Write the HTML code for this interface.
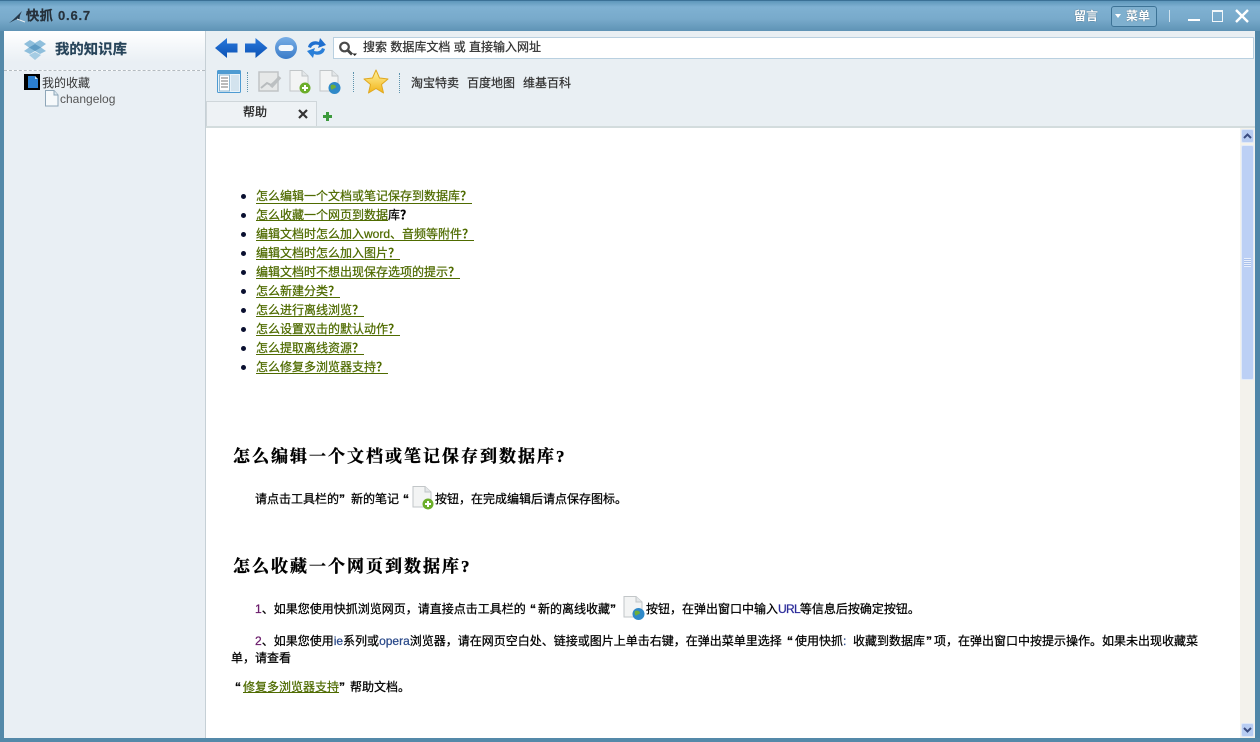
<!DOCTYPE html>
<html lang="zh"><head><meta charset="utf-8"><title>快抓</title>
<style>
html,body{margin:0;padding:0}
body{width:1260px;height:742px;position:relative;overflow:hidden;background:#fff;font:12px/16px "Liberation Sans","WenQuanYi Zen Hei","Noto Sans CJK SC",sans-serif;color:#000}
.a{position:absolute;white-space:nowrap}
.t{-webkit-text-stroke:.25px currentColor}
a{color:#4f6b00;text-decoration:underline}
.l{position:absolute;left:256px;white-space:nowrap;height:15px;line-height:18px;border-bottom:1px solid #4f6b00;color:#4f6b00;-webkit-text-stroke:.25px currentColor}
.l b{-webkit-text-stroke:0}
.d{position:absolute;left:241px;width:5px;height:5px;border-radius:50%;background:#0a1030}
.h{position:absolute;left:233px;white-space:nowrap;font:bold 17px/22px "Liberation Serif","Noto Serif CJK SC",serif;letter-spacing:2px;color:#000;-webkit-text-stroke:.35px #000}
.sep{position:absolute;width:0;height:20px;border-left:1px dotted #5d93ad}
svg{position:absolute;overflow:visible}
</style></head><body>
<!-- chrome -->
<div class="a" style="left:0;top:0;width:1260px;height:31px;background:linear-gradient(#5e97bb,#7fb1d2 20%,#78aacb 60%,#5f93b5);border-top:1px solid #3b7196;box-sizing:border-box"></div>
<div class="a" style="left:0;top:31px;width:4px;height:711px;background:#5489a9"></div>
<div class="a" style="left:1255px;top:31px;width:5px;height:711px;background:#4f86a8"></div>
<div class="a" style="left:0;top:738px;width:1260px;height:4px;background:#5489a9"></div>
<svg style="left:8px;top:9px" width="18" height="16" viewBox="0 0 18 16"><path d="M1 14C5 11 8 8 14 2C12 6 11 8 12 12C10 10 9 10 7 11C5 12 3 13 1 14Z" fill="#26394a"/><path d="M9 10L17 13" stroke="#e8eef2" stroke-width="1"/></svg>
<div class="a" style="left:26px;top:7px;font:bold 13px/17px 'Liberation Sans','WenQuanYi Zen Hei',sans-serif;color:#27323c;letter-spacing:.8px;-webkit-text-stroke:.2px #27323c">快抓 0.6.7</div>
<div class="a" style="left:1074px;top:8px;color:#fff;text-shadow:0 0 1px #30485a;font-weight:bold">留言</div>
<div class="a" style="left:1111px;top:6px;width:44px;height:19px;border:1px solid #3d7396;border-radius:3px;background:#7fb0cf;box-sizing:content-box"></div>
<div class="a" style="left:1115px;top:14px;width:0;height:0;border:3px solid transparent;border-top:4px solid #fff"></div>
<div class="a" style="left:1126px;top:8px;color:#fff;text-shadow:0 0 1px #30485a;font-weight:bold">菜单</div>
<div class="a" style="left:1169px;top:10px;width:1px;height:12px;background:#cfe2ee"></div>
<div class="a" style="left:1188px;top:19px;width:12px;height:2px;background:#fff"></div>
<div class="a" style="left:1212px;top:10px;width:9px;height:9px;border:1.5px solid #f2f7fa;border-top-width:2px"></div>
<svg style="left:1235px;top:9px" width="14" height="14" viewBox="0 0 14 14"><path d="M1 1L13 13M13 1L1 13" stroke="#fff" stroke-width="2.4"/></svg>

<!-- sidebar -->
<div class="a" style="left:4px;top:31px;width:201px;height:707px;background:#e9eff4"></div>
<div class="a" style="left:4px;top:31px;width:201px;height:40px;background:linear-gradient(#fff,#e9eff4 80%);border-bottom:1px dashed #b4bbc0;box-sizing:border-box"></div>
<div class="a" style="left:205px;top:31px;width:1px;height:707px;background:#c6d0d6"></div>
<svg style="left:23px;top:38px" width="24" height="24" viewBox="0 0 24 24"><path d="M1 6L7 2L12 5L17 2L23 6L18 9.500L23 13L17 16L12 13L7 16L1 13L6 9.500Z" fill="#8fbfdc"/><path d="M6 9.500L12 6L18 9.500L12 13Z" fill="#5f9cc4"/><path d="M6 17L12 14L18 17L12 22Z" fill="#a5cce3"/></svg>
<div class="a" style="left:55px;top:42px;font-size:14.400px;line-height:17px;font-weight:bold;color:#27445a;-webkit-text-stroke:.2px #27445a">我的知识库</div>
<svg style="left:24px;top:74px" width="17" height="16" viewBox="0 0 17 16"><rect width="16" height="16" fill="#000"/><path d="M4 2H11L14 5V14H4Z" fill="#2b7fd0"/><path d="M11 2L14 5H11Z" fill="#bfe0f6"/></svg>
<div class="a" style="left:42px;top:75px;color:#333">我的收藏</div>
<svg style="left:45px;top:90px" width="14" height="17" viewBox="0 0 14 17"><path d="M.5 .500H9L13 5V16H.5Z" fill="#f6f9fb" stroke="#8ea6b8"/><path d="M9 .500V5H13" fill="#dbe8f0" stroke="#8ea6b8"/></svg>
<div class="a" style="left:60px;top:91px;color:#555;font-size:12px">changelog</div>

<!-- toolbar -->
<div class="a" style="left:206px;top:31px;width:1049px;height:97px;background:#e9eff3"></div>
<svg style="left:215px;top:38px" width="23" height="20" viewBox="0 0 23 20"><defs><linearGradient id="ar" x1="0" y1="0" x2="0" y2="1"><stop offset="0" stop-color="#2a78dc"/><stop offset="1" stop-color="#0b52b4"/></linearGradient></defs><path d="M0 10L12 0V5.500H22.500V14.500H12V20Z" fill="url(#ar)"/></svg>
<svg style="left:245px;top:38px" width="23" height="20" viewBox="0 0 23 20"><path d="M22.500 10L10.500 0V5.500H0V14.500H10.500V20Z" fill="url(#ar)"/></svg>
<svg style="left:274px;top:36px" width="24" height="24" viewBox="0 0 24 24"><defs><linearGradient id="m" x1="0" y1="0" x2="0" y2="1"><stop offset="0" stop-color="#78aee6"/><stop offset="1" stop-color="#3a7bc8"/></linearGradient></defs><circle cx="12" cy="12" r="11" fill="url(#m)"/><rect x="4.500" y="9" width="15" height="6" rx="3" fill="#f4f8fc"/></svg>
<svg style="left:305px;top:36px" width="23" height="24" viewBox="0 0 23 24"><path d="M3 11C4 6 9 4 14 6L15 2L21 9L13 12L14 9C10 8 7 9 6 12Z" fill="#1f6fcf"/><path d="M20 13C19 18 14 20 9 18L8 22L2 15L10 12L9 15C13 16 16 15 17 12Z" fill="#2a7fd8"/></svg>
<div class="a" style="left:333px;top:37px;width:921px;height:22px;background:#fff;border:1px solid #b9d0e0;box-sizing:border-box"></div>
<svg style="left:338px;top:41px" width="20" height="16" viewBox="0 0 20 16"><circle cx="6.500" cy="6" r="4.300" fill="#fff" stroke="#4a4a4a" stroke-width="2.200"/><path d="M10 9.500L14 13.500" stroke="#444" stroke-width="2.800"/><path d="M14.500 12.500H19L16.700 15Z" fill="#222"/></svg>
<div class="a t" style="left:363px;top:39px;color:#333">搜索 数据库文档 或 直接输入网址</div>

<svg style="left:217px;top:70px" width="24" height="23" viewBox="0 0 24 23"><rect x=".5" y=".5" width="23" height="22" rx="1" fill="#e9f3fa" stroke="#4e9bd2"/><rect x="1" y="1" width="22" height="3" fill="#4e9bd2"/><rect x="2.500" y="5" width="10" height="16" fill="#fff" stroke="#8db7d2"/><path d="M4 8H11M4 11H11M4 14H11M4 17H11" stroke="#777"/><rect x="14" y="5" width="8" height="16" fill="#d3e3ee"/></svg>
<div class="sep" style="left:247px;top:72px"></div>
<svg style="left:258px;top:70px" width="24" height="23" viewBox="0 0 24 23"><rect x="1" y="2" width="19" height="19" fill="#e6e8e8" stroke="#c0c4c6" stroke-width="1.500"/><path d="M3 18L9 13L13 15L20 9" stroke="#b8bcbe" stroke-width="2" fill="none"/><path d="M13 17L22 7" stroke="#bcc0c2" stroke-width="3.500"/></svg>
<svg style="left:288px;top:70px" width="24" height="25" viewBox="0 0 24 25"><path d="M2 .5H14L20 6V21H2Z" fill="#f3f4f4" stroke="#c2c6c8"/><path d="M14 .5V6H20" fill="#e3e6e8" stroke="#c2c6c8"/><circle cx="17" cy="18" r="5.500" fill="#6cae2a"/><path d="M17 15V21M14 18H20" stroke="#fff" stroke-width="2"/></svg>
<svg style="left:318px;top:70px" width="24" height="25" viewBox="0 0 24 25"><path d="M2 .5H14L20 6V21H2Z" fill="#f3f4f4" stroke="#c2c6c8"/><path d="M14 .5V6H20" fill="#e3e6e8" stroke="#c2c6c8"/><circle cx="16.500" cy="18" r="6" fill="#2f89c8"/><path d="M13 15C15 14 18 15 18 17C17 19 15 18 14 20C13 19 12 17 13 15Z" fill="#6fae3a"/></svg>
<div class="sep" style="left:353px;top:72px"></div>
<svg style="left:363px;top:69px" width="26" height="26" viewBox="0 0 26 26"><defs><linearGradient id="s" x1="0" y1="0" x2="0" y2="1"><stop offset="0" stop-color="#fff3a0"/><stop offset="1" stop-color="#f2b417"/></linearGradient></defs><path d="M13 1L16.500 9L25 10L18.500 15.500L20.500 24L13 19.500L5.500 24L7.500 15.500L1 10L9.500 9Z" fill="url(#s)" stroke="#e0a820" stroke-linejoin="round"/></svg>
<div class="sep" style="left:399px;top:73px"></div>
<div class="a t" style="left:411px;top:75px;color:#333">淘宝特卖</div>
<div class="a t" style="left:467px;top:75px;color:#333">百度地图</div>
<div class="a t" style="left:523px;top:75px;color:#333">维基百科</div>

<!-- tabs -->
<div class="a" style="left:206px;top:101px;width:111px;height:26px;background:#eef2f5;border:1px solid #cfd6da;border-bottom:none;box-sizing:border-box"></div>
<div class="a t" style="left:243px;top:104px;color:#222">帮助</div>
<svg style="left:298px;top:109px" width="10" height="10" viewBox="0 0 10 10"><path d="M1 1L9 9M9 1L1 9" stroke="#333" stroke-width="2.200"/></svg>
<svg style="left:323px;top:112px" width="9" height="9" viewBox="0 0 9 9"><path d="M4.500 0V9M0 4.500H9" stroke="#3c9a3c" stroke-width="3"/></svg>
<div class="a" style="left:206px;top:126px;width:1049px;height:2px;background:#d3dcdd"></div>

<!-- scrollbar -->
<div class="a" style="left:1240px;top:128px;width:15px;height:610px;background:#f3f2ec"></div>
<div class="a" style="left:1241px;top:129px;width:13px;height:14px;background:#b8cdf2;border:1px solid #dfe8f7;box-sizing:border-box;border-radius:2px"></div>
<svg style="left:1243px;top:133px" width="9" height="6" viewBox="0 0 9 6"><path d="M1 5L4.500 1.500L8 5" fill="none" stroke="#3a4c80" stroke-width="2"/></svg>
<div class="a" style="left:1241px;top:145px;width:13px;height:235px;background:#bcd0f5;border:1px solid #e2ebf9;box-sizing:border-box;border-radius:2px"></div>
<div class="a" style="left:1244px;top:258px;width:7px;height:9px;background:repeating-linear-gradient(#e8effc 0 1px,#a9c0ea 1px 2px)"></div>
<div class="a" style="left:1241px;top:723px;width:13px;height:14px;background:#b8cdf2;border:1px solid #dfe8f7;box-sizing:border-box;border-radius:2px"></div>
<svg style="left:1243px;top:727px" width="9" height="6" viewBox="0 0 9 6"><path d="M1 1L4.500 4.500L8 1" fill="none" stroke="#3a4c80" stroke-width="2"/></svg>

<!-- list -->
<div class="d" style="top:194px"></div><div class="l" style="top:188px;line-height:16px">怎么编辑一个文档或笔记保存到数据库<b>？</b></div>
<div class="d" style="top:213px"></div><div class="a t" style="left:256px;top:207px;line-height:16px"><a href="#">怎么收藏一个网页到数据</a>库<b>？</b></div>
<div class="d" style="top:232px"></div><div class="l" style="top:225px">编辑文档时怎么加入word、音频等附件<b>？</b></div>
<div class="d" style="top:251px"></div><div class="l" style="top:244px">编辑文档时怎么加入图片<b>？</b></div>
<div class="d" style="top:270px"></div><div class="l" style="top:263px">编辑文档时不想出现保存选项的提示<b>？</b></div>
<div class="d" style="top:289px"></div><div class="l" style="top:282px">怎么新建分类<b>？</b></div>
<div class="d" style="top:308px"></div><div class="l" style="top:301px">怎么进行离线浏览<b>？</b></div>
<div class="d" style="top:327px"></div><div class="l" style="top:320px">怎么设置双击的默认动作<b>？</b></div>
<div class="d" style="top:346px"></div><div class="l" style="top:339px">怎么提取离线资源<b>？</b></div>
<div class="d" style="top:365px"></div><div class="l" style="top:358px">怎么修复多浏览器支持<b>？</b></div>

<!-- article -->
<div class="h" style="top:446px">怎么编辑一个文档或笔记保存到数据库?</div>
<div class="a t" style="left:255px;top:491px">请点击工具栏的</div>
<div class="a t" style="left:339px;top:491px;font-weight:bold">”</div>
<div class="a t" style="left:351px;top:491px">新的笔记</div>
<div class="a t" style="left:403px;top:491px;font-weight:bold">“</div>
<svg style="left:411px;top:486px" width="24" height="25" viewBox="0 0 24 25"><path d="M2 .5H14L20 6V21H2Z" fill="#f3f4f4" stroke="#c2c6c8"/><path d="M14 .5V6H20" fill="#e3e6e8" stroke="#c2c6c8"/><circle cx="17" cy="18" r="5.500" fill="#6cae2a"/><path d="M17 15V21M14 18H20" stroke="#fff" stroke-width="2"/></svg>
<div class="a t" style="left:435px;top:491px">按钮，在完成编辑后请点保存图标。</div>

<div class="h" style="top:556px">怎么收藏一个网页到数据库?</div>
<div class="a t" style="left:255px;top:601px"><span style="color:#6a1b6a">1</span>、如果您使用快抓浏览网页，请直接点击工具栏的</div>
<div class="a t" style="left:530px;top:601px;font-weight:bold">“</div>
<div class="a t" style="left:538px;top:601px">新的离线收藏</div>
<div class="a t" style="left:610px;top:601px;font-weight:bold">”</div>
<svg style="left:622px;top:596px" width="24" height="25" viewBox="0 0 24 25"><path d="M2 .5H14L20 6V21H2Z" fill="#f3f4f4" stroke="#c2c6c8"/><path d="M14 .5V6H20" fill="#e3e6e8" stroke="#c2c6c8"/><circle cx="16.500" cy="18" r="6" fill="#2f89c8"/><path d="M13 15C15 14 18 15 18 17C17 19 15 18 14 20C13 19 12 17 13 15Z" fill="#6fae3a"/></svg>
<div class="a t" style="left:646px;top:601px">按钮，在弹出窗口中输入<span style="color:#2b2b9a;letter-spacing:-.7px">URL</span>等信息后按确定按钮。</div>
<div class="a t" style="left:255px;top:633px"><span style="color:#6a1b6a">2</span>、如果您使用<span style="color:#2b4a8a">ie</span>系列或<span style="color:#2b4a8a">opera</span>浏览器，请在网页空白处、链接或图片上单击右键，在弹出菜单里选择</div>
<div class="a t" style="left:787px;top:633px;font-weight:bold">“</div>
<div class="a t" style="left:795px;top:633px">使用快抓<span style="color:#2b4a8a">:</span></div>
<div class="a t" style="left:853px;top:633px">收藏到数据库</div>
<div class="a t" style="left:926px;top:633px;font-weight:bold">”</div>
<div class="a t" style="left:934px;top:633px">项，在弹出窗口中按提示操作。如果未出现收藏菜</div>
<div class="a t" style="left:231px;top:650px">单，请查看</div>
<div class="a t" style="left:235px;top:679px;font-weight:bold">“</div>
<div class="a t" style="left:243px;top:679px"><a href="#">修复多浏览器支持</a></div>
<div class="a t" style="left:339px;top:679px;font-weight:bold">”</div>
<div class="a t" style="left:350px;top:679px">帮助文档。</div>
</body></html>
